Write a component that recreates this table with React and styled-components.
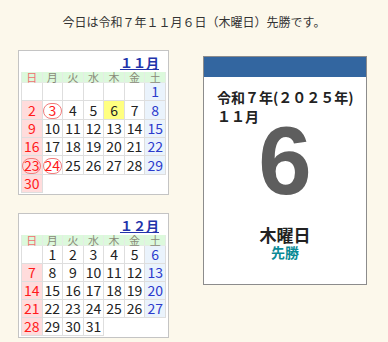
import React from 'react';
import styled, { createGlobalStyle } from 'styled-components';

const GlobalStyle = createGlobalStyle`
  body {
    margin: 0;
    background: #fcf8eb;
    font-family: "Noto Sans CJK JP", "Noto Sans", sans-serif;
    color: #333;
  }
`;

const Page = styled.div`
  padding-top: 14px;
`;

const Lead = styled.p`
  margin: 0;
  text-align: center;
  font-size: 12px;
  line-height: 16px;
  color: #333;
`;

const Main = styled.div`
  display: flex;
  align-items: flex-start;
  padding: 20px 0 0 18px;
`;

const Calendars = styled.div`
  display: flex;
  flex-direction: column;
  gap: 18px;
  width: 151px;
`;

const CalBox = styled.div`
  box-sizing: border-box;
  width: 151px;
  background: #fff;
  border: 1px solid #c4c4c4;
  padding: 3px 3px 1px 2px;
`;

const MonthTitle = styled.div`
  text-align: right;
  padding-right: 6px;
  height: 18px;
  line-height: 18px;
  font-size: 13px;
  font-weight: bold;
  color: #2233aa;
  text-decoration: underline;
`;

const Table = styled.table`
  border-collapse: collapse;
  table-layout: fixed;
  width: 145px;
`;

const Head = styled.th`
  height: 10px;
  padding: 0;
  font-size: 11px;
  line-height: 10px;
  font-weight: normal;
  background: #dcf9dc;
  border: 1px solid #e4ece4;
  border-top: none;
  color: ${p => (p.$sun ? '#f07070' : '#8a8a78')};
`;

const Cell = styled.td`
  height: 17px;
  padding: 0;
  text-align: center;
  font-size: 14px;
  line-height: 17px;
  border: 1px solid #dedede;
  color: ${p => (p.$kind === 'sun' ? '#ff1a1a' : p.$kind === 'sat' ? '#2a3acc' : '#222')};
  background: ${p =>
    p.$today ? '#ffff80' : p.$kind === 'sun' ? '#ffdcdc' : p.$kind === 'sat' ? '#eaf3fc' : '#fff'};
`;

const Holiday = styled.span`
  display: inline-block;
  box-sizing: border-box;
  width: 19px;
  height: 16px;
  line-height: 13px;
  border: 1.5px solid #f07c7c;
  border-radius: 8px;
  color: #ff1a1a;
  vertical-align: middle;
`;

const DayCard = styled.div`
  box-sizing: border-box;
  width: 164px;
  height: 229px;
  margin: 6px 0 0 34px;
  background: #fff;
  border: 1px solid #8c8c8c;
  display: flex;
  flex-direction: column;
`;

const Band = styled.div`
  height: 20px;
  background: #3366a0;
`;

const Era = styled.div`
  padding: 11px 0 0 13px;
  font-size: 14px;
  line-height: 19px;
  font-weight: bold;
  color: #222;
`;

const BigDay = styled.div`
  margin-top: -13px;
  text-align: center;
  font-family: "Liberation Sans", Arial, sans-serif;
  font-size: 96px;
  line-height: 95px;
  font-weight: bold;
  color: #5e5e5e;
`;

const Weekday = styled.div`
  margin-top: 18px;
  text-align: center;
  font-size: 17px;
  line-height: 18px;
  font-weight: bold;
  color: #222;
`;

const Rokuyo = styled.div`
  text-align: center;
  font-size: 14px;
  line-height: 16px;
  font-weight: bold;
  color: #0a8a96;
`;

const DOW = ['日', '月', '火', '水', '木', '金', '土'];
const FW = s => String(s).replace(/[0-9]/g, d => String.fromCharCode(d.charCodeAt(0) + 0xfee0));

const buildWeeks = (year, month) => {
  const first = new Date(year, month - 1, 1).getDay();
  const count = new Date(year, month, 0).getDate();
  const cells = Array(first).fill(null);
  for (let d = 1; d <= count; d++) cells.push(d);
  const weeks = [];
  for (let i = 0; i < cells.length; i += 7) weeks.push(cells.slice(i, i + 7));
  return weeks;
};

const Month = ({ year, month, holidays = [], today }) => (
  <CalBox>
    <MonthTitle>{FW(month)}月</MonthTitle>
    <Table>
      <thead>
        <tr>
          {DOW.map((d, i) => (
            <Head key={d} $sun={i === 0}>{d}</Head>
          ))}
        </tr>
      </thead>
      <tbody>
        {buildWeeks(year, month).map((week, w) => (
          <tr key={w}>
            {week.map((day, i) => {
              if (day === null) return <Cell key={i} />;
              const kind = i === 0 ? 'sun' : i === 6 ? 'sat' : 'day';
              return (
                <Cell key={i} $kind={kind} $today={day === today}>
                  {holidays.includes(day) ? <Holiday>{day}</Holiday> : day}
                </Cell>
              );
            })}
          </tr>
        ))}
      </tbody>
    </Table>
  </CalBox>
);

export default function App() {
  return (
    <Page>
      <GlobalStyle />
      <Lead>今日は令和７年１１月６日（木曜日）先勝です。</Lead>
      <Main>
        <Calendars>
          <Month year={2025} month={11} holidays={[3, 23, 24]} today={6} />
          <Month year={2025} month={12} />
        </Calendars>
        <DayCard>
          <Band />
          <Era>
            令和７年(２０２５年)
            <br />
            １１月
          </Era>
          <BigDay>6</BigDay>
          <Weekday>木曜日</Weekday>
          <Rokuyo>先勝</Rokuyo>
        </DayCard>
      </Main>
    </Page>
  );
}
